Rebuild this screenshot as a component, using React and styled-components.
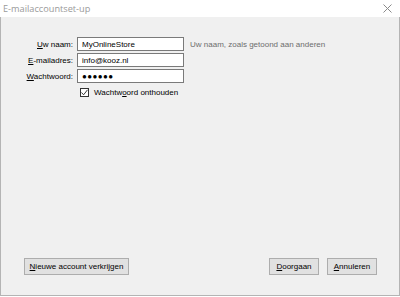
import styled, { createGlobalStyle } from "styled-components";

const Global = createGlobalStyle`
  html, body { margin: 0; padding: 0; background: #ffffff; }
  body { font-family: "Liberation Sans", Arial, sans-serif; }
`;

const Window = styled.div`
  width: 400px;
  height: 297px;
  display: flex;
  flex-direction: column;
  box-sizing: border-box;
  background: #ffffff;
`;

const TitleBar = styled.div`
  height: 17px;
  flex-shrink: 0;
  display: flex;
  align-items: center;
  justify-content: space-between;
  padding: 0 8px 0 3px;
  background: #ffffff;
`;

const Title = styled.span`
  font-size: 9.2px;
  color: #9a9a9a;
  font-family: "Open Sans", "Liberation Sans", sans-serif;
`;

const Body = styled.div`
  flex: 1;
  display: flex;
  flex-direction: column;
  justify-content: space-between;
  background: #f0f0f0;
  border: 1px solid #b4b4b4;
  border-top: none;
  margin-bottom: 1px;
  padding: 20px 22px 19px 19px;
  font-size: 8px;
  color: #000;
`;

const Form = styled.div`
  display: grid;
  grid-template-columns: 53px 107px auto;
  column-gap: 4px;
  row-gap: 2px;
  align-items: center;
`;

const Label = styled.label`
  text-align: right;
  white-space: nowrap;
`;

const Key = styled.span`
  text-decoration: underline;
  text-underline-offset: 1px;
`;

const Input = styled.div`
  height: 14px;
  box-sizing: border-box;
  border: 1px solid #7a7a7a;
  background: #ffffff;
  padding: 0 4px;
  display: flex;
  align-items: center;
  font-size: 8px;
  letter-spacing: ${(p) => (p.$secret ? "0.4px" : "0")};
`;

const Hint = styled.span`
  color: #6d6d6d;
  margin-left: 2px;
  white-space: nowrap;
`;

const CheckRow = styled.div`
  grid-column: 2 / 4;
  display: flex;
  align-items: center;
  gap: 5px;
  margin-top: 3px;
  padding-left: 3px;
`;

const Box = styled.span`
  width: 9px;
  height: 9px;
  box-sizing: border-box;
  border: 1px solid #333;
  background: #fff;
  display: flex;
  align-items: center;
  justify-content: center;
`;

const Footer = styled.div`
  display: flex;
  align-items: center;
  gap: 8px;
  padding-left: 4px;
  margin-bottom: 1px;
`;

const Spacer = styled.div`
  flex: 1;
`;

const Button = styled.div`
  height: 17px;
  box-sizing: border-box;
  width: ${(p) => p.$w || 50}px;
  border: 1px solid #adadad;
  background: #e1e1e1;
  display: flex;
  align-items: center;
  justify-content: center;
  font-size: 8px;
  white-space: nowrap;
`;

export default function App() {
  return (
    <Window>
      <Global />
      <TitleBar>
        <Title>E-mailaccountset-up</Title>
        <svg width="9" height="9" viewBox="0 0 9 9">
          <path d="M0.5 0.5 L8.5 8.5 M8.5 0.5 L0.5 8.5" stroke="#8a8a8a" strokeWidth="1" />
        </svg>
      </TitleBar>
      <Body>
        <Form>
          <Label><Key>U</Key>w naam:</Label>
          <Input>MyOnlineStore</Input>
          <Hint>Uw naam, zoals getoond aan anderen</Hint>

          <Label><Key>E</Key>-mailadres:</Label>
          <Input>info@kooz.nl</Input>
          <span />

          <Label><Key>W</Key>achtwoord:</Label>
          <Input $secret>●●●●●●</Input>
          <span />

          <CheckRow>
            <Box>
              <svg width="7" height="7" viewBox="0 0 7 7">
                <path d="M0.5 3.5 L2.6 5.8 L6.5 0.8" stroke="#222" strokeWidth="0.9" fill="none" />
              </svg>
            </Box>
            <span>Wachtw<Key>o</Key>ord onthouden</span>
          </CheckRow>
        </Form>
        <Footer>
          <Button $w={105}><span><Key>N</Key>ieuwe account verkrijgen</span></Button>
          <Spacer />
          <Button><span><Key>D</Key>oorgaan</span></Button>
          <Button><span><Key>A</Key>nnuleren</span></Button>
        </Footer>
      </Body>
    </Window>
  );
}
